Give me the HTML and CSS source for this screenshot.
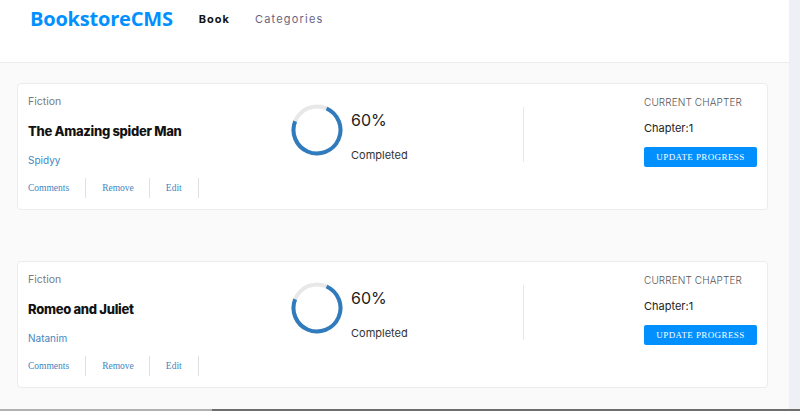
FILE: index.html
```html
<!DOCTYPE html>
<html lang="en">
<head>
<meta charset="utf-8">
<title>BookstoreCMS</title>
<link rel="stylesheet" href="styles.css">
</head>
<body>
<div class="app">
  <header class="header">
    <a class="logo" href="#">BookstoreCMS</a>
    <nav class="nav">
      <a class="nav-link active" href="#">Book</a>
      <a class="nav-link" href="#">Categories</a>
    </nav>
  </header>
  <main class="main">
    <section class="card">
      <div class="info">
        <p class="genre">Fiction</p>
        <h2 class="title">The Amazing spider Man</h2>
        <p class="author">Spidyy</p>
        <div class="actions">
          <button class="action">Comments</button>
          <button class="action">Remove</button>
          <button class="action">Edit</button>
        </div>
      </div>
      <div class="progress">
        <svg class="ring" width="52" height="52" viewBox="0 0 52 52">
          <circle cx="26" cy="26" r="23.5" fill="none" stroke="#e8e8e8" stroke-width="4"/>
          <circle cx="26" cy="26" r="23.5" fill="none" stroke="#307bbe" stroke-width="4" stroke-dasharray="109 200" transform="rotate(-66 26 26)"/>
        </svg>
        <div class="pct">
          <p class="pct-value">60%</p>
          <p class="pct-label">Completed</p>
        </div>
      </div>
      <div class="divider"></div>
      <div class="chapter">
        <p class="chapter-head">CURRENT CHAPTER</p>
        <p class="chapter-name">Chapter:1</p>
        <button class="update">UPDATE PROGRESS</button>
      </div>
    </section>
    <section class="card">
      <div class="info">
        <p class="genre">Fiction</p>
        <h2 class="title">Romeo and Juliet</h2>
        <p class="author">Natanim</p>
        <div class="actions">
          <button class="action">Comments</button>
          <button class="action">Remove</button>
          <button class="action">Edit</button>
        </div>
      </div>
      <div class="progress">
        <svg class="ring" width="52" height="52" viewBox="0 0 52 52">
          <circle cx="26" cy="26" r="23.5" fill="none" stroke="#e8e8e8" stroke-width="4"/>
          <circle cx="26" cy="26" r="23.5" fill="none" stroke="#307bbe" stroke-width="4" stroke-dasharray="109 200" transform="rotate(-66 26 26)"/>
        </svg>
        <div class="pct">
          <p class="pct-value">60%</p>
          <p class="pct-label">Completed</p>
        </div>
      </div>
      <div class="divider"></div>
      <div class="chapter">
        <p class="chapter-head">CURRENT CHAPTER</p>
        <p class="chapter-name">Chapter:1</p>
        <button class="update">UPDATE PROGRESS</button>
      </div>
    </section>
  </main>
</div>
<div class="hscroll"><div class="hscroll-thumb"></div></div>
</body>
</html>
```

FILE: styles.css
```css
* { box-sizing: border-box; }
html, body { margin: 0; padding: 0; }
body {
  background: #eef0f5;
  font-family: Inter, "Open Sans", sans-serif;
  height: 411px;
  overflow: hidden;
}
p, h2 { margin: 0; }
.app {
  width: 789px;
  min-height: 411px;
  background: #fafafa;
}
.header {
  height: 63px;
  background: #fff;
  border-bottom: 1px solid #ececec;
  display: flex;
  align-items: flex-start;
  padding: 7px 0 0 30px;
}
.logo {
  font-family: "Open Sans", sans-serif;
  font-weight: 700;
  font-size: 20px;
  color: #0290ff;
  text-decoration: none;
  letter-spacing: -0.2px;
  line-height: 24px;
}
.nav {
  display: flex;
  gap: 25px;
  margin-left: 26px;
  padding-top: 5px;
}
.nav-link {
  font-size: 11px;
  letter-spacing: 1.2px;
  color: #6a6480;
  text-decoration: none;
  line-height: 14px;
}
.nav-link.active {
  color: #121212;
  font-weight: 700;
  letter-spacing: 1px;
}
.main {
  padding: 20px 21px 0 17px;
  display: flex;
  flex-direction: column;
  gap: 51px;
}
.card {
  height: 127px;
  background: #fff;
  border: 1px solid #ececec;
  border-radius: 4px;
  display: flex;
  align-items: flex-start;
  padding: 11px 0 0 10px;
}
.info {
  width: 264px;
  display: flex;
  flex-direction: column;
}
.genre {
  font-size: 10.5px;
  color: #7a7a7a;
  line-height: 14px;
}
.title {
  margin-top: 14px;
  font-size: 13px;
  font-weight: 800;
  color: #121212;
  line-height: 16px;
  letter-spacing: -0.3px;
}
.author {
  margin-top: 15px;
  font-size: 10px;
  color: #4386bf;
  line-height: 13px;
}
.actions {
  display: flex;
  margin-top: 11px;
}
.action {
  font-family: "Liberation Serif", serif;
  font-size: 9.5px;
  color: #4386bf;
  background: none;
  border: none;
  border-right: 1px solid #e0e0e0;
  height: 20px;
  padding: 0 16px;
  cursor: pointer;
}
.action:first-child { padding-left: 0; }
.action:nth-child(2) { padding-right: 15px; }
.progress {
  width: 231px;
  display: flex;
  align-items: flex-start;
  gap: 8px;
  padding-top: 9px;
}
.ring { display: block; margin-left: -1px; }
.pct { padding-top: 6px; }
.pct-value {
  font-size: 16px;
  color: #222;
  line-height: 20px;
}
.pct-label {
  margin-top: 18px;
  font-size: 11px;
  color: #333;
  line-height: 14px;
}
.divider {
  width: 1px;
  height: 55px;
  background: #e8e8e8;
  margin-top: 12px;
}
.chapter {
  margin-left: 120px;
  display: flex;
  flex-direction: column;
  align-items: flex-start;
}
.chapter-head {
  font-size: 10px;
  font-weight: 300;
  color: #555;
  line-height: 14px;
  letter-spacing: 0.1px;
}
.chapter-name {
  margin-top: 12px;
  font-size: 11px;
  color: #222;
  line-height: 14px;
}
.update {
  margin-top: 12px;
  width: 113px;
  height: 20px;
  background: #0290ff;
  color: #fff;
  border: none;
  border-radius: 2px;
  font-family: "Liberation Serif", serif;
  font-size: 9px;
  letter-spacing: 0.4px;
  cursor: pointer;
}
.hscroll {
  position: fixed;
  left: 0;
  right: 0;
  bottom: 0;
  height: 2px;
  background: #6e6e6e;
}
.hscroll-thumb {
  width: 212px;
  height: 2px;
  background: #b0b0b0;
}
```
